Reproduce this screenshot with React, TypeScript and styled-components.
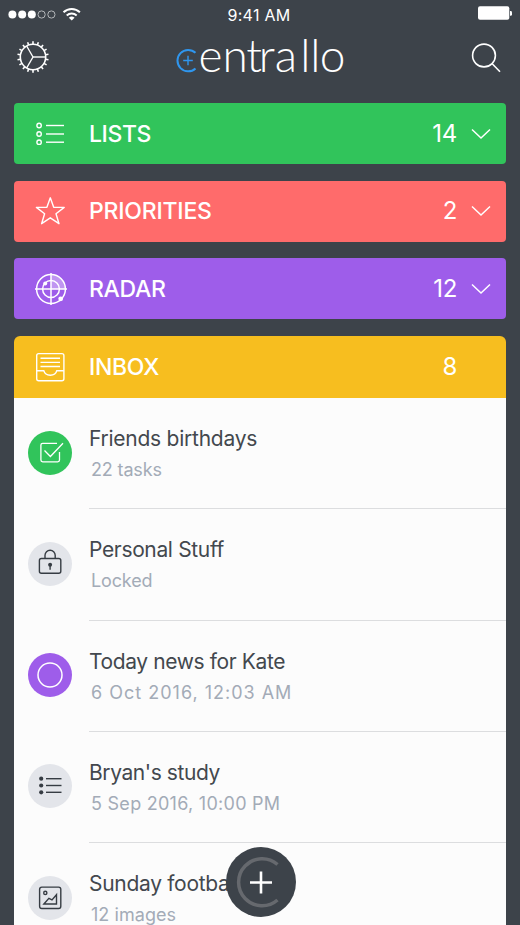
import React from "react";
import styled, { createGlobalStyle } from "styled-components";

const GlobalStyle = createGlobalStyle`
  html, body { margin: 0; padding: 0; background: #3d434a; }
  * { box-sizing: border-box; }
  svg { display: block; overflow: visible; }
`;

const Screen = styled.div`
  position: relative;
  width: 520px;
  height: 925px;
  overflow: hidden;
  background: #3d434a;
  color: #fff;
  font-family: Inter, "Liberation Sans", sans-serif;
`;

const StatusBar = styled.div`
  display: grid;
  grid-template-columns: 1fr auto 1fr;
  align-items: center;
  height: 28px;
  padding: 0 7px 0 8px;
`;

const Time = styled.span`
  padding: 2px 3px 0 0;
  font-size: 16px;
  line-height: 20px;
  letter-spacing: 0.3px;
`;

const Battery = styled.div`
  justify-self: end;
`;

const Header = styled.header`
  display: grid;
  grid-template-columns: 1fr auto 1fr;
  height: 75px;
  padding: 0 17px;
`;

const SettingsButton = styled.div`
  padding-top: 13px;
`;

const Brand = styled.div`
  padding-top: 2px;
`;

const SearchButton = styled.div`
  justify-self: end;
  padding: 14px 1px 0 0;
`;

const Stack = styled.main`
  display: flex;
  flex-direction: column;
  gap: 16.7px;
  padding: 0 14px;
`;

const Section = styled.section<{ $color: string; $open?: boolean }>`
  display: flex;
  align-items: center;
  height: ${(p) => (p.$open ? 62 : 61)}px;
  border-radius: ${(p) => (p.$open ? "6px 6px 0 0" : "4px")};
  background: ${(p) => p.$color};
`;

const SectionIcon = styled.div`
  width: 75px;
  padding-left: 20px;
`;

const SectionTitle = styled.h2<{ $spacing: number }>`
  flex: 1;
  margin: 0;
  font-size: 23px;
  line-height: 30px;
  font-weight: 500;
  letter-spacing: ${(p) => p.$spacing}px;
`;

const Count = styled.span`
  font-size: 24px;
  line-height: 30px;
  letter-spacing: -0.3px;
`;

const Toggle = styled.div`
  display: flex;
  justify-content: flex-end;
  width: 49px;
  padding-right: 15px;
`;

const Inbox = styled.div`
  display: flex;
  flex-direction: column;
`;

const List = styled.ul`
  margin: 0;
  padding: 0;
  list-style: none;
  background: #fcfcfc;
`;

const Row = styled.li`
  display: flex;
  height: 111.25px;
  padding-left: 14px;
`;

const Disc = styled.div<{ $color: string }>`
  display: flex;
  flex: none;
  align-items: center;
  justify-content: center;
  width: 44px;
  height: 44px;
  margin: 32.5px 17px 0 0;
  border-radius: 50%;
  background: ${(p) => p.$color};
`;

const RowBody = styled.div`
  flex: 1;
  padding-top: 27px;
  border-bottom: 1px solid #dcdddf;
  white-space: nowrap;
`;

const RowTitle = styled.div<{ $spacing: number }>`
  font-size: 21px;
  line-height: 28px;
  color: #43484e;
  letter-spacing: ${(p) => p.$spacing}px;
`;

const RowMeta = styled.div<{ $spacing: number }>`
  padding: 4px 0 0 2px;
  font-size: 18px;
  line-height: 26px;
  color: #a3abb7;
  letter-spacing: ${(p) => p.$spacing}px;
`;

const AddButton = styled.button`
  position: absolute;
  left: 226px;
  top: 847px;
  width: 70px;
  height: 70px;
  padding: 0;
  border: 0;
  border-radius: 50%;
  background: #3d434a;
`;

const Signal = () => (
  <svg width="76" height="20" viewBox="8 4 76 20" fill="none">
    {[12.4, 22.2, 31.8].map((x) => <circle key={x} cx={x} cy="14.5" r="4" fill="#fff" />)}
    {[41.6, 51.4].map((x) => <circle key={x} cx={x} cy="14.5" r="3.6" stroke="#b4b7ba" />)}
    <g stroke="#fff" strokeWidth="2">
      <path d="M63.5 12.3a12 12 0 0 1 16.4 0M66.7 15.4a7.6 7.6 0 0 1 10 0" />
    </g>
    <path d="M68.8 17.7a4.4 4.4 0 0 1 5.8 0l-2.9 2.9z" fill="#fff" />
  </svg>
);

const teeth = Array.from({ length: 18 }, (_, i) => i * 20 + 10);

const Gear = () => (
  <svg width="32" height="32" viewBox="-16 -16 32 32" stroke="#fff" strokeWidth="1.6" fill="none">
    <circle r="12.7" />
    {teeth.map((a) => <path key={a} d="M12.7 0H15.7" transform={`rotate(${a})`} />)}
    {[0, 120, 240].map((a) => <path key={a} d="M0 0H12.7" strokeWidth="1.4" transform={`rotate(${a})`} />)}
  </svg>
);

const Logo = () => (
  <svg width="172" height="50" viewBox="174 30 172 50" fill="none">
    <g stroke="#2f96ee" strokeWidth="2">
      <path d="M195.5 52.8A10.7 10.7 0 1 0 195.5 68.4" />
      <path d="M188 55.7V65.3M183.2 60.5H192.8" strokeWidth="1.4" />
    </g>
    <text
      x="198.4 222.6 246.2 258.8 274.8 300.2 310.2 319.8"
      y="71.8"
      fill="#fff"
      fontFamily="Lato, sans-serif"
      fontWeight="300"
      fontSize="46"
    >
      entrallo
    </text>
  </svg>
);

const Search = () => (
  <svg width="32" height="32" viewBox="470 42 32 32" fill="none" stroke="#fff" strokeWidth="1.6">
    <circle cx="484" cy="55.5" r="11.4" />
    <path d="M492.2 63.8L500 71.7" />
  </svg>
);

const Chevron = () => (
  <svg width="20" height="12" viewBox="0 0 20 12" fill="none" stroke="#fff" strokeWidth="1.5">
    <path d="M1 1.5L10 10L19 1.5" />
  </svg>
);

const ListsIcon = () => (
  <svg width="32" height="32" viewBox="34 117 32 32" fill="none" stroke="#fff" strokeWidth="1.4">
    {[124.5, 133, 141.2].map((y) => (
      <React.Fragment key={y}>
        <circle cx="39.1" cy={y} r="2.2" />
        <path d={`M46 ${y}H64`} />
      </React.Fragment>
    ))}
  </svg>
);

const StarIcon = () => (
  <svg width="32" height="32" viewBox="34 195 32 32" fill="none" stroke="#fff" strokeWidth="1.4" strokeLinejoin="round">
    <path d="M50.3 197.8L53.7 207.2L64.2 207.4L56 213.8L59 223.7L50.3 217.8L41.6 223.7L44.6 213.8L36.4 207.4L46.9 207.2Z" />
  </svg>
);

const RadarIcon = () => (
  <svg width="34" height="34" viewBox="-17 -17 34 34" fill="none" stroke="#fff" strokeWidth="1.5">
    <path d="M0 0V-14.4A14.4 14.4 0 0 1 14.4 0Z" fill="#fff" fillOpacity=".35" stroke="none" />
    <circle r="14.4" />
    <circle r="8.4" />
    <path d="M0-16V16M-16 0H16" />
    <circle cx="-5.8" cy="-5.5" r="2" fill="#fff" stroke="none" />
    <circle cx="9.7" cy="9.8" r="2.4" fill="#fff" stroke="none" />
  </svg>
);

const InboxIcon = () => (
  <svg width="32" height="32" viewBox="34 350 32 32" fill="none" stroke="#fff" strokeWidth="1.4">
    <rect x="36.7" y="352.6" width="27.2" height="27.2" rx="2" />
    <path d="M40.5 357.3H60M40.5 361.4H60M40.5 365.5H60M36.7 369.7H43.8C45.3 375.8 55.3 375.8 56.8 369.7H63.9" />
  </svg>
);

const CheckIcon = () => (
  <svg width="24" height="24" viewBox="38 441 24 24" fill="none" stroke="#fff" strokeWidth="1.3">
    <path d="M57 443.3H42.7Q40.9 443.3 40.9 445.1V460Q40.9 461.8 42.7 461.8H57.7Q59.5 461.8 59.5 460V452M44.5 450.5L50.4 456.5L63 443.3" />
  </svg>
);

const LockIcon = () => (
  <svg width="24" height="26" viewBox="38 550.5 24 26" fill="none" stroke="#363c43" strokeWidth="1.4">
    <rect x="39.4" y="558" width="21.4" height="14.8" rx="2" />
    <path d="M45 558V554.8a5.1 5.1 0 0 1 10.2 0V558M50.1 565V569.2" />
    <circle cx="50.1" cy="564.3" r="2" fill="#363c43" stroke="none" />
  </svg>
);

const RingIcon = () => (
  <svg width="26" height="26" viewBox="-13 -13 26 26" fill="none" stroke="#fff" strokeWidth="1.5">
    <circle r="12" />
  </svg>
);

const BulletsIcon = () => (
  <svg width="24" height="24" viewBox="38 774.6 24 24" stroke="#363c43" strokeWidth="1.4">
    {[779.3, 786.1, 792.9].map((y) => (
      <React.Fragment key={y}>
        <circle cx="41.2" cy={y} r="2.1" fill="#363c43" stroke="none" />
        <path d={`M46 ${y}H61.5`} />
      </React.Fragment>
    ))}
  </svg>
);

const ImageIcon = () => (
  <svg width="24" height="24" viewBox="38 885.6 24 24" fill="none" stroke="#363c43" strokeWidth="1.4">
    <rect x="39.6" y="886.7" width="21.2" height="21.4" rx="2.2" />
    <circle cx="45.3" cy="892.5" r="1.6" />
    <path d="M43.9 903.6L48.9 897.9L52 899.5L56.5 894.3V903.6Z" />
  </svg>
);

const sections = [
  { title: "LISTS", count: 14, color: "#31c45b", icon: <ListsIcon />, spacing: -0.4 },
  { title: "PRIORITIES", count: 2, color: "#ff6b6b", icon: <StarIcon />, spacing: -0.2 },
  { title: "RADAR", count: 12, color: "#9e5dea", icon: <RadarIcon />, spacing: -0.3 },
];

const items = [
  { title: "Friends birthdays", meta: "22 tasks", color: "#31c45b", icon: <CheckIcon />, ts: -0.25, ms: -0.15 },
  { title: "Personal Stuff", meta: "Locked", color: "#e3e5ea", icon: <LockIcon />, ts: -0.35, ms: -0.15 },
  { title: "Today news for Kate", meta: "6 Oct 2016, 12:03 AM", color: "#9e5dea", icon: <RingIcon />, ts: -0.38, ms: 1 },
  { title: "Bryan's study", meta: "5 Sep 2016, 10:00 PM", color: "#e3e5ea", icon: <BulletsIcon />, ts: -0.42, ms: 0.27 },
  { title: "Sunday football", meta: "12 images", color: "#e3e5ea", icon: <ImageIcon />, ts: -0.3, ms: 0.05 },
];

export default function App() {
  return (
    <Screen>
      <GlobalStyle />
      <StatusBar>
        <Signal />
        <Time>9:41 AM</Time>
        <Battery>
          <svg width="36" height="16" viewBox="477 5 36 16" fill="#fff">
            <rect x="478" y="5.3" width="31.3" height="13.5" rx="2" />
            <path d="M510 10h.6q1.4 0 1.4 1.4v2q0 1.4-1.4 1.4h-.6z" />
          </svg>
        </Battery>
      </StatusBar>
      <Header>
        <SettingsButton><Gear /></SettingsButton>
        <Brand><Logo /></Brand>
        <SearchButton><Search /></SearchButton>
      </Header>
      <Stack>
        {sections.map((s) => (
          <Section key={s.title} $color={s.color}>
            <SectionIcon>{s.icon}</SectionIcon>
            <SectionTitle $spacing={s.spacing}>{s.title}</SectionTitle>
            <Count>{s.count}</Count>
            <Toggle><Chevron /></Toggle>
          </Section>
        ))}
        <Inbox>
          <Section $color="#f7be1f" $open>
            <SectionIcon><InboxIcon /></SectionIcon>
            <SectionTitle $spacing={-0.3}>INBOX</SectionTitle>
            <Count>8</Count>
            <Toggle />
          </Section>
          <List>
            {items.map((item) => (
              <Row key={item.title}>
                <Disc $color={item.color}>{item.icon}</Disc>
                <RowBody>
                  <RowTitle $spacing={item.ts}>{item.title}</RowTitle>
                  <RowMeta $spacing={item.ms}>{item.meta}</RowMeta>
                </RowBody>
              </Row>
            ))}
          </List>
        </Inbox>
      </Stack>
      <AddButton aria-label="Add">
        <svg width="70" height="70" viewBox="226 847 70 70" fill="none">
          <path d="M277.5 864.5A23.5 23.5 0 1 0 277.5 900" stroke="#66696e" strokeWidth="3.5" />
          <path d="M261 871.5V893.5M250 882.5H272" stroke="#fff" strokeWidth="2.6" />
        </svg>
      </AddButton>
    </Screen>
  );
}
